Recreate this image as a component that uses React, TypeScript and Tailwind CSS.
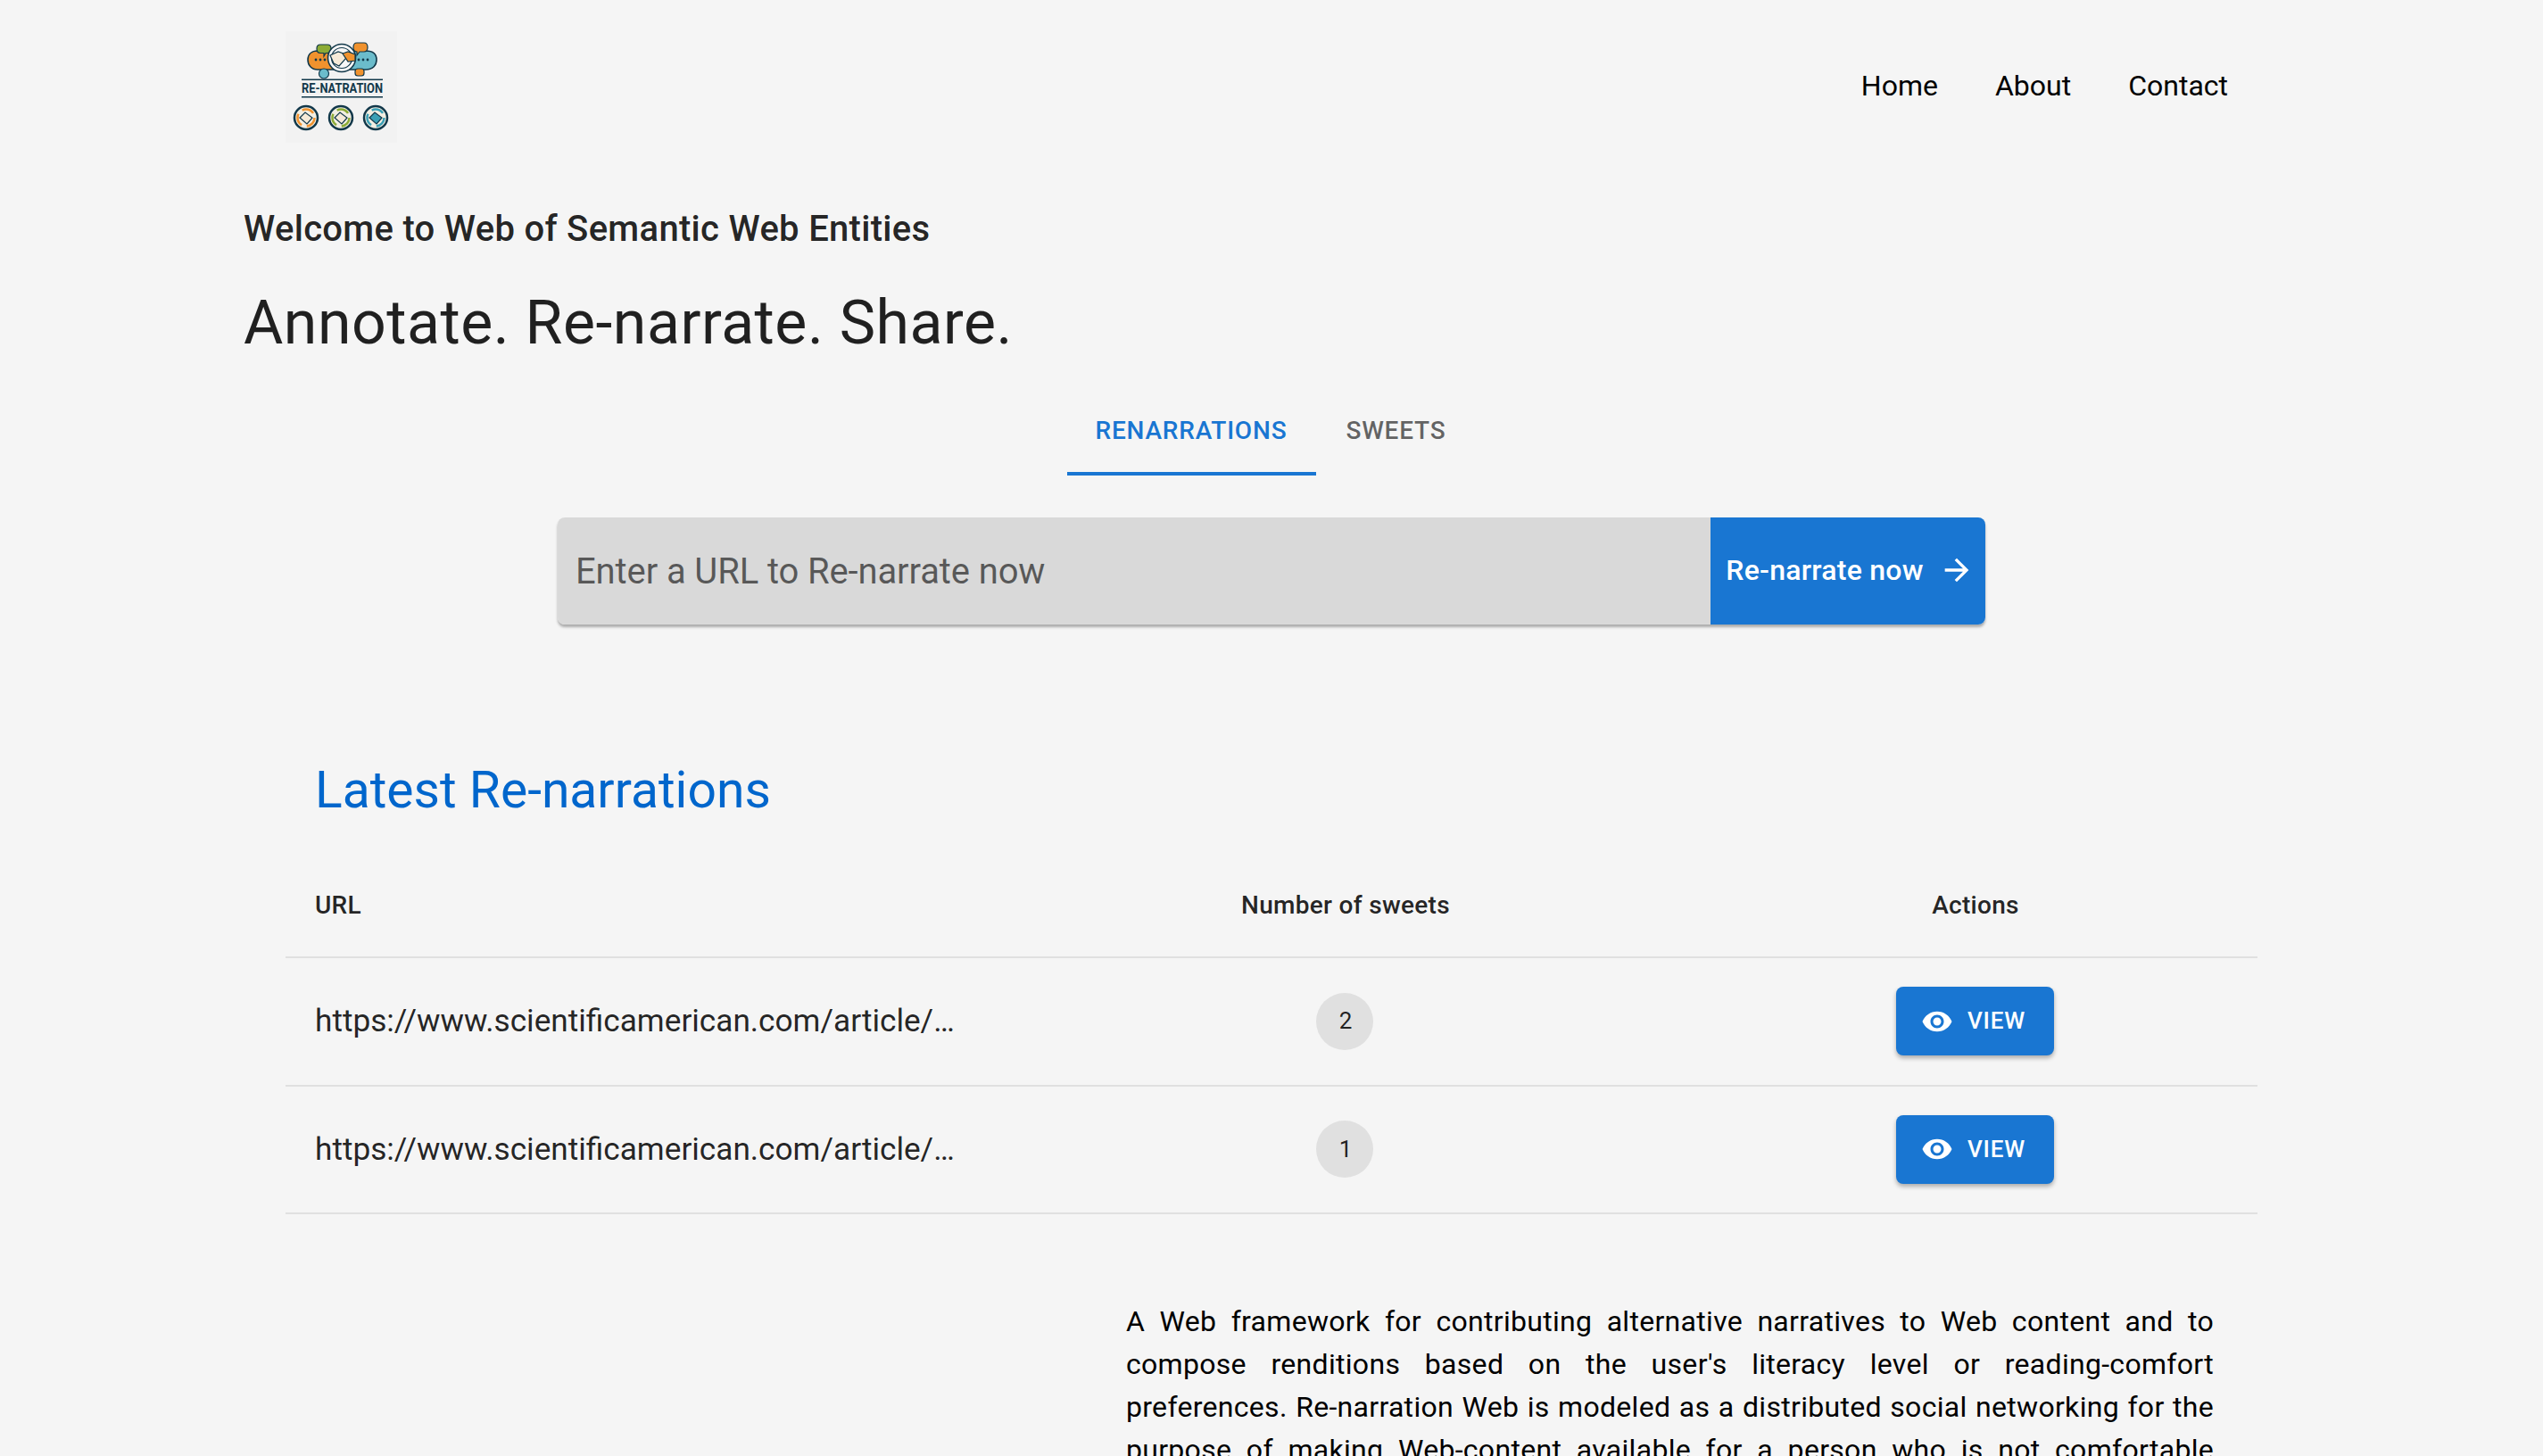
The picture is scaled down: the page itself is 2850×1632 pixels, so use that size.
import { useState } from 'react'

const rows = [
  { url: 'https://www.scientificamerican.com/article/…', sweets: 2 },
  { url: 'https://www.scientificamerican.com/article/…', sweets: 1 },
]

function Logo() {
  return (
    <svg viewBox="0 0 125 125" className="block h-[125px] w-[125px] bg-[#f2f2f2]">
      {/* speech bubbles */}
      <path d="M36 22c-7 0-11 4-11 10s4 11 11 11h20V22z" fill="#f0922e" stroke="#12384a" strokeWidth="1.6" />
      <path d="M72 22h18c8 0 12 4 12 10s-4 11-12 11H72z" fill="#6bbccb" stroke="#12384a" strokeWidth="1.6" />
      <path d="M39 15h8c3 0 4 2 4 4.500s-1 5-4 5h-2l-2 3.500v-3.500h-4c-3 0-4-2-4-5s1-4.500 4-4.500z" fill="#8cab35" stroke="#12384a" strokeWidth="1.2" />
      <path d="M80 13h8c3 0 4 2 4 5s-1 5-4 5h-5l-3 4v-4c-3 0-4-2-4-5s1-5 4-5z" fill="#f0922e" stroke="#12384a" strokeWidth="1.2" />
      <circle cx="43" cy="47.500" r="5.500" fill="#6bbccb" stroke="#12384a" strokeWidth="1.2" />
      <rect x="78" y="42" width="10" height="8" rx="3" fill="#f0922e" stroke="#12384a" strokeWidth="1.2" />
      <circle cx="63" cy="30" r="15.500" fill="#f7f7f7" stroke="#12384a" strokeWidth="1.6" />
      <circle cx="63" cy="30" r="11.500" fill="none" stroke="#12384a" strokeWidth="1.2" />
      <path d="M50 27l9-4 6 2 3 5-8 9-6-3z" fill="#f6ead8" stroke="#12384a" strokeWidth="1.2" />
      <path d="M64 25l6-2 8 3v7l-8 1z" fill="#f0922e" stroke="#12384a" strokeWidth="1.2" />
      <circle cx="34" cy="32" r="1.400" fill="#12384a" />
      <circle cx="39" cy="32" r="1.400" fill="#12384a" />
      <circle cx="44" cy="32" r="1.400" fill="#12384a" />
      <circle cx="82" cy="32" r="1.400" fill="#12384a" />
      <circle cx="87" cy="32" r="1.400" fill="#12384a" />
      <circle cx="92" cy="32" r="1.400" fill="#12384a" />
      <rect x="18" y="53.500" width="91" height="1.500" fill="#12384a" />
      <text x="63.500" y="69" textAnchor="middle" fontFamily="Roboto, sans-serif" fontWeight="700" fontSize="15" textLength="91" lengthAdjust="spacingAndGlyphs" fill="#12384a">RE-NATRATION</text>
      <rect x="18" y="73" width="91" height="1.500" fill="#12384a" />
      {[23, 62, 101].map((cx, i) => (
        <g key={cx}>
          <circle cx={cx} cy="97" r="13" fill="#f2eee2" stroke="#12384a" strokeWidth="2.500" />
          <circle cx={cx} cy="97" r="9.500" fill="none" stroke={i === 0 ? '#f0922e' : i === 1 ? '#8cab35' : '#3a9fb5'} strokeWidth="2.500" strokeDasharray="14 6" />
          <path d={`M${cx - 7} 97l6-6 8 6-6 7z`} fill={i === 2 ? '#3a9fb5' : '#f6ead8'} stroke="#12384a" strokeWidth="1.200" />
        </g>
      ))}
    </svg>
  )
}

function EyeIcon() {
  return (
    <svg viewBox="0 0 24 24" className="h-[36px] w-[36px] fill-current">
      <path d="M12 4.5C7 4.5 2.73 7.61 1 12c1.73 4.39 6 7.5 11 7.5s9.27-3.11 11-7.5c-1.73-4.39-6-7.5-11-7.5zM12 17c-2.76 0-5-2.24-5-5s2.24-5 5-5 5 2.24 5 5-2.24 5-5 5zm0-8c-1.66 0-3 1.34-3 3s1.34 3 3 3 3-1.34 3-3-1.34-3-3-3z" />
    </svg>
  )
}

function ArrowIcon() {
  return (
    <svg viewBox="0 0 24 24" className="h-[40px] w-[40px] fill-current">
      <path d="M12 4l-1.41 1.41L16.17 11H4v2h12.17l-5.58 5.59L12 20l8-8z" />
    </svg>
  )
}

export default function App() {
  const [tab] = useState('renarrations')

  return (
    <div className="h-screen overflow-hidden bg-[#f5f5f5] font-['Roboto',sans-serif] text-[#000000de]">
      <header className="flex h-[190px] items-start justify-between pl-[320px] pr-[353px] pt-[35px]">
        <Logo />
        <nav className="-mt-[2px] flex h-[125px] items-center gap-[64px] text-[32px] text-black">
          <a>Home</a>
          <a>About</a>
          <a>Contact</a>
        </nav>
      </header>

      <section className="pl-[273px] pt-[37px]">
        <h2 className="text-[40px] font-medium leading-[60px] tracking-[0.3px]">Welcome to Web of Semantic Web Entities</h2>
        <h1 className="mt-[35px] text-[68px] leading-[80px] tracking-[0.5px]">Annotate. Re-narrate. Share.</h1>
      </section>

      <div className="mt-[35px] flex justify-center pr-[2px]">
        <div className={`flex h-[96px] items-center border-b-4 border-[#1976d2] pl-[31px] pr-[33px] text-[28px] font-medium uppercase tracking-[0.8px] ${tab === 'renarrations' ? 'text-[#1976d2]' : ''}`}>
          Renarrations
        </div>
        <div className="flex h-[96px] items-center border-b-4 border-transparent pl-[33px] pr-[31px] text-[28px] font-medium uppercase tracking-[0.8px] text-black/60">
          Sweets
        </div>
      </div>

      <div className="mx-auto mt-[47px] flex h-[120px] w-[1600px] overflow-hidden rounded-[8px] shadow-[0_3px_3px_rgba(0,0,0,0.3)]">
        <div className="flex flex-1 items-center bg-[#d9d9d9] px-[20px] pt-[1px] text-[40px] tracking-[-0.12px] text-black/60">
          Enter a URL to Re-narrate now
        </div>
        <button className="flex w-[308px] items-center justify-center gap-[17px] bg-[#1976d2] pb-[2px] pl-[5px] text-[32px] font-medium tracking-[0.25px] text-white">
          Re-narrate now
          <ArrowIcon />
        </button>
      </div>

      <main className="mx-[320px] mt-[136px]">
        <h3 className="pl-[33px] text-[57px] leading-[100px] text-[#0066cc]">Latest Re-narrations</h3>

        <div className="mt-[20px]">
          <div className="grid h-[118px] grid-cols-[796px_782px_1fr] items-center border-b-2 border-[#e0e0e0] pt-[1px] text-[28px] font-medium tracking-[0.3px]">
            <div className="pl-[33px]">URL</div>
            <div className="pl-[2px] text-center">Number of sweets</div>
            <div className="text-center">Actions</div>
          </div>
          {rows.map((row, i) => (
            <div key={i} className="grid h-[143.5px] grid-cols-[796px_782px_1fr] items-center border-b-2 border-[#e0e0e0]">
              <div className="pl-[33px] text-[35.2px]">{row.url}</div>
              <div className="flex justify-center">
                <span className="flex h-[64px] w-[64px] items-center justify-center rounded-full bg-[#e0e0e0] pl-[2px] text-[26px]">{row.sweets}</span>
              </div>
              <div className="flex justify-center pr-[2px]">
                <button className="flex h-[77px] w-[177px] items-center justify-center gap-[16px] rounded-[8px] bg-[#1976d2] pr-[3px] text-[26px] font-medium uppercase tracking-[0.8px] text-white shadow-[0_3px_5px_rgba(0,0,0,0.3)]">
                  <EyeIcon />
                  View
                </button>
              </div>
            </div>
          ))}
        </div>
      </main>

      <p className="ml-[1262px] mt-[96px] w-[1219px] text-justify text-[32px] leading-[48px] tracking-[0.3px] text-black">
        A Web framework for contributing alternative narratives to Web content and to compose renditions based on the user's literacy level or reading-comfort preferences. Re-narration Web is modeled as a distributed social networking for the purpose of making Web-content available for a person who is not comfortable reading the language or the form in which the content was originally published on the Web.
      </p>
    </div>
  )
}
